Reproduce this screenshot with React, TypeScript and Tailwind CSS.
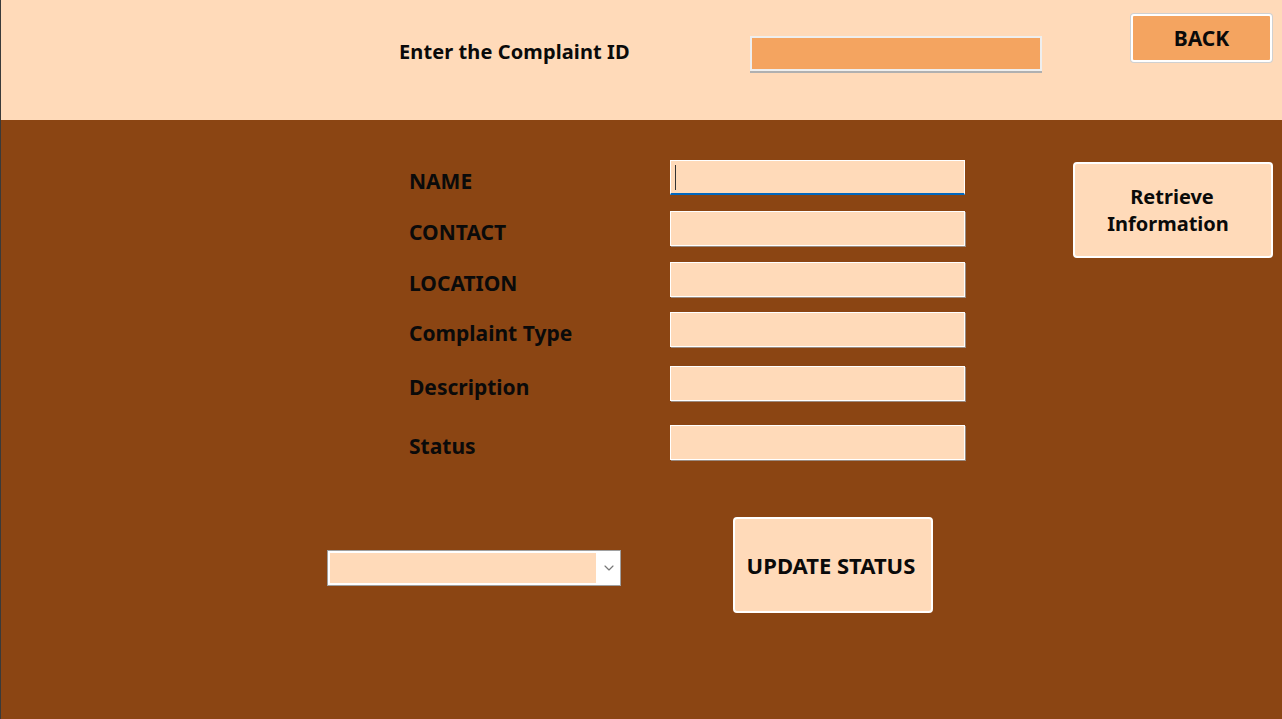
import { ChevronDown } from "lucide-react";

const labels = [
    { text: "NAME", mt: "mt-[40px]" },
    { text: "CONTACT", mt: "mt-[16px]" },
    { text: "LOCATION", mt: "mt-[16px]" },
    { text: "Complaint Type", mt: "mt-[15px]" },
    { text: "Description", mt: "mt-[19px]" },
    { text: "Status", mt: "mt-[24px]" },
];

export default function App() {
    return (
        <div className="w-[1282px] h-[719px] flex flex-col font-['Noto_Sans',sans-serif] text-[#0a0a0a] overflow-hidden border-l border-[#3a3a3a]">
            {/* header */}
            <div className="h-[120px] bg-[#FFDAB9] flex items-start shrink-0">
                <div className="ml-[398px] mt-[38px] w-[351px] text-[20px] leading-[28px] font-bold tracking-[0.1px]">
                    Enter the Complaint ID
                </div>
                <div className="mt-[36px] w-[292px] h-[35px] bg-[#F4A460] border-2 border-[#eeeeee] shadow-[0_2px_0_#b0b0b0]" />
                <button className="ml-[89px] mt-[14px] w-[141px] h-[48px] bg-[#F4A460] border-2 border-white rounded-[3px] shadow-[0_0_0_1px_#d0d0d0] text-[21px] font-bold leading-none">
                    BACK
                </button>
            </div>

            {/* body */}
            <div className="flex-1 bg-[#8B4513] flex flex-col">
                <div className="flex items-start">
                    <div className="ml-[408px] w-[556px] flex flex-col">
                        {labels.map((l, i) => (
                            <div key={l.text} className={`flex items-center ${l.mt}`}>
                                <div className="w-[261px] pt-[7px] text-[21px] leading-[28px] font-bold">{l.text}</div>
                                <div
                                    className={
                                        i === 0
                                            ? "w-[295px] h-[35px] bg-[#FFDAB9] border border-white border-b-2 border-b-[#0067c0] flex items-center pl-[4px]"
                                            : "w-[295px] h-[35px] bg-[#FFDAB9] border border-white shadow-[1px_1px_0_#9a8a80]"
                                    }
                                >
                                    {i === 0 && <span className="w-[1px] h-[25px] bg-[#333]" />}
                                </div>
                            </div>
                        ))}
                    </div>
                    <button className="ml-[108px] mt-[42px] w-[200px] h-[96px] pr-[10px] bg-[#FFDAB9] border-2 border-white rounded-[4px] text-[20px] font-bold leading-[27px] flex flex-col items-center justify-center">
                        <span className="ml-[8px]">Retrieve</span>
                        <span>Information</span>
                    </button>
                </div>

                <div className="flex items-center mt-[57px] ml-[326px]">
                    <div className="w-[294px] h-[36px] mt-[6px] bg-white border border-[#a0a0a0] flex items-center p-[2px]">
                        <div className="w-[266px] h-full bg-[#FFDAB9]" />
                        <ChevronDown className="ml-[5px] w-[16px] h-[16px] text-[#777]" strokeWidth={1.75} />
                    </div>
                    <button className="ml-[112px] w-[200px] h-[96px] pr-[4px] bg-[#FFDAB9] border-2 border-white rounded-[4px] text-[22px] font-bold leading-none">
                        UPDATE STATUS
                    </button>
                </div>
            </div>
        </div>
    );
}
